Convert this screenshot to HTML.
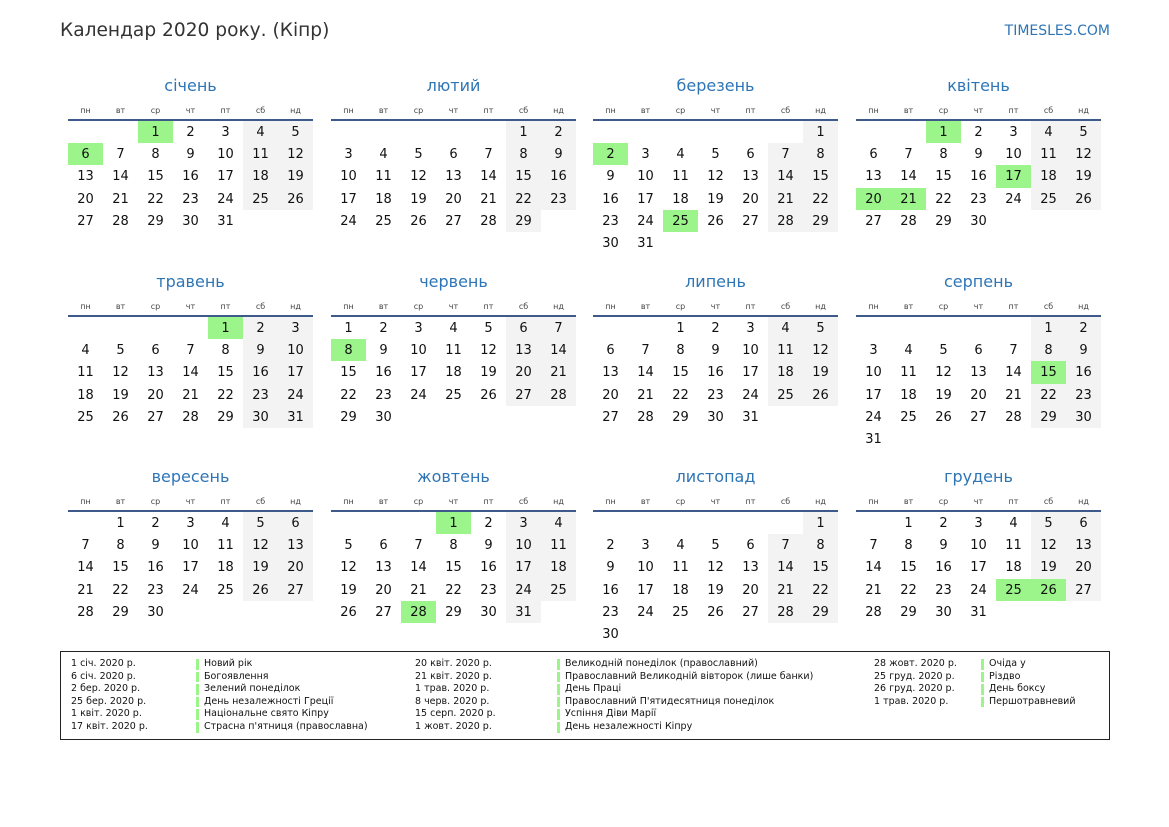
<!DOCTYPE html><html><head><meta charset="utf-8"><style>
body{margin:0;width:1169px;height:827px;background:#fff;font-family:"DejaVu Sans","Liberation Sans",sans-serif;color:#111;position:relative;overflow:hidden}
.t{position:absolute;left:60px;top:20px;font-size:18.6px;color:#333}
.site{position:absolute;right:59px;top:23px;font-size:14px;color:#2e75b6}
.m{position:absolute;width:245px}
.m h3{position:absolute;top:-43px;left:0;width:245px;margin:0;text-align:center;font-weight:normal;font-size:16px;color:#2e75b6}
.hd{position:absolute;top:-13px;left:0;display:grid;grid-template-columns:repeat(7,35px);font-size:8px;color:#444;text-align:center}
.ln{position:absolute;top:0;left:0;width:245px;height:2px;background:#3d5a8a}
.g{position:absolute;top:2px;left:0;display:grid;grid-template-columns:repeat(7,35px);grid-auto-rows:22.2px;font-size:13px;text-align:center;line-height:23px}
.g span:nth-child(7n+6):not(:empty),.g span:nth-child(7n):not(:empty){background:#f3f3f3}
.g span.h{background:#9bf58a!important}
.lg{position:absolute;left:60px;top:651px;width:1048px;height:87px;border:1.5px solid #222;font-size:9.5px;color:#111}
.c{position:absolute;top:6px;line-height:12.6px;white-space:nowrap}
.c.n{top:7px}
.c.n span{display:block;border-left:3px solid #9bf58a;padding-left:5px;margin:0 0 2px 0;line-height:10.6px}
</style></head><body>
<div class="t">Календар 2020 року. (Кіпр)</div>
<div class="site">TIMESLES.COM</div>

<div class="m" style="left:68px;top:119px"><h3>січень</h3><div class="hd"><span>пн</span><span>вт</span><span>ср</span><span>чт</span><span>пт</span><span>сб</span><span>нд</span></div><div class="ln"></div><div class="g"><span></span><span></span><span class="h">1</span><span>2</span><span>3</span><span>4</span><span>5</span><span class="h">6</span><span>7</span><span>8</span><span>9</span><span>10</span><span>11</span><span>12</span><span>13</span><span>14</span><span>15</span><span>16</span><span>17</span><span>18</span><span>19</span><span>20</span><span>21</span><span>22</span><span>23</span><span>24</span><span>25</span><span>26</span><span>27</span><span>28</span><span>29</span><span>30</span><span>31</span></div></div>

<div class="m" style="left:331px;top:119px"><h3>лютий</h3><div class="hd"><span>пн</span><span>вт</span><span>ср</span><span>чт</span><span>пт</span><span>сб</span><span>нд</span></div><div class="ln"></div><div class="g"><span></span><span></span><span></span><span></span><span></span><span>1</span><span>2</span><span>3</span><span>4</span><span>5</span><span>6</span><span>7</span><span>8</span><span>9</span><span>10</span><span>11</span><span>12</span><span>13</span><span>14</span><span>15</span><span>16</span><span>17</span><span>18</span><span>19</span><span>20</span><span>21</span><span>22</span><span>23</span><span>24</span><span>25</span><span>26</span><span>27</span><span>28</span><span>29</span></div></div>

<div class="m" style="left:593px;top:119px"><h3>березень</h3><div class="hd"><span>пн</span><span>вт</span><span>ср</span><span>чт</span><span>пт</span><span>сб</span><span>нд</span></div><div class="ln"></div><div class="g"><span></span><span></span><span></span><span></span><span></span><span></span><span>1</span><span class="h">2</span><span>3</span><span>4</span><span>5</span><span>6</span><span>7</span><span>8</span><span>9</span><span>10</span><span>11</span><span>12</span><span>13</span><span>14</span><span>15</span><span>16</span><span>17</span><span>18</span><span>19</span><span>20</span><span>21</span><span>22</span><span>23</span><span>24</span><span class="h">25</span><span>26</span><span>27</span><span>28</span><span>29</span><span>30</span><span>31</span></div></div>

<div class="m" style="left:856px;top:119px"><h3>квітень</h3><div class="hd"><span>пн</span><span>вт</span><span>ср</span><span>чт</span><span>пт</span><span>сб</span><span>нд</span></div><div class="ln"></div><div class="g"><span></span><span></span><span class="h">1</span><span>2</span><span>3</span><span>4</span><span>5</span><span>6</span><span>7</span><span>8</span><span>9</span><span>10</span><span>11</span><span>12</span><span>13</span><span>14</span><span>15</span><span>16</span><span class="h">17</span><span>18</span><span>19</span><span class="h">20</span><span class="h">21</span><span>22</span><span>23</span><span>24</span><span>25</span><span>26</span><span>27</span><span>28</span><span>29</span><span>30</span></div></div>

<div class="m" style="left:68px;top:315px"><h3>травень</h3><div class="hd"><span>пн</span><span>вт</span><span>ср</span><span>чт</span><span>пт</span><span>сб</span><span>нд</span></div><div class="ln"></div><div class="g"><span></span><span></span><span></span><span></span><span class="h">1</span><span>2</span><span>3</span><span>4</span><span>5</span><span>6</span><span>7</span><span>8</span><span>9</span><span>10</span><span>11</span><span>12</span><span>13</span><span>14</span><span>15</span><span>16</span><span>17</span><span>18</span><span>19</span><span>20</span><span>21</span><span>22</span><span>23</span><span>24</span><span>25</span><span>26</span><span>27</span><span>28</span><span>29</span><span>30</span><span>31</span></div></div>

<div class="m" style="left:331px;top:315px"><h3>червень</h3><div class="hd"><span>пн</span><span>вт</span><span>ср</span><span>чт</span><span>пт</span><span>сб</span><span>нд</span></div><div class="ln"></div><div class="g"><span>1</span><span>2</span><span>3</span><span>4</span><span>5</span><span>6</span><span>7</span><span class="h">8</span><span>9</span><span>10</span><span>11</span><span>12</span><span>13</span><span>14</span><span>15</span><span>16</span><span>17</span><span>18</span><span>19</span><span>20</span><span>21</span><span>22</span><span>23</span><span>24</span><span>25</span><span>26</span><span>27</span><span>28</span><span>29</span><span>30</span></div></div>

<div class="m" style="left:593px;top:315px"><h3>липень</h3><div class="hd"><span>пн</span><span>вт</span><span>ср</span><span>чт</span><span>пт</span><span>сб</span><span>нд</span></div><div class="ln"></div><div class="g"><span></span><span></span><span>1</span><span>2</span><span>3</span><span>4</span><span>5</span><span>6</span><span>7</span><span>8</span><span>9</span><span>10</span><span>11</span><span>12</span><span>13</span><span>14</span><span>15</span><span>16</span><span>17</span><span>18</span><span>19</span><span>20</span><span>21</span><span>22</span><span>23</span><span>24</span><span>25</span><span>26</span><span>27</span><span>28</span><span>29</span><span>30</span><span>31</span></div></div>

<div class="m" style="left:856px;top:315px"><h3>серпень</h3><div class="hd"><span>пн</span><span>вт</span><span>ср</span><span>чт</span><span>пт</span><span>сб</span><span>нд</span></div><div class="ln"></div><div class="g"><span></span><span></span><span></span><span></span><span></span><span>1</span><span>2</span><span>3</span><span>4</span><span>5</span><span>6</span><span>7</span><span>8</span><span>9</span><span>10</span><span>11</span><span>12</span><span>13</span><span>14</span><span class="h">15</span><span>16</span><span>17</span><span>18</span><span>19</span><span>20</span><span>21</span><span>22</span><span>23</span><span>24</span><span>25</span><span>26</span><span>27</span><span>28</span><span>29</span><span>30</span><span>31</span></div></div>

<div class="m" style="left:68px;top:510px"><h3>вересень</h3><div class="hd"><span>пн</span><span>вт</span><span>ср</span><span>чт</span><span>пт</span><span>сб</span><span>нд</span></div><div class="ln"></div><div class="g"><span></span><span>1</span><span>2</span><span>3</span><span>4</span><span>5</span><span>6</span><span>7</span><span>8</span><span>9</span><span>10</span><span>11</span><span>12</span><span>13</span><span>14</span><span>15</span><span>16</span><span>17</span><span>18</span><span>19</span><span>20</span><span>21</span><span>22</span><span>23</span><span>24</span><span>25</span><span>26</span><span>27</span><span>28</span><span>29</span><span>30</span></div></div>

<div class="m" style="left:331px;top:510px"><h3>жовтень</h3><div class="hd"><span>пн</span><span>вт</span><span>ср</span><span>чт</span><span>пт</span><span>сб</span><span>нд</span></div><div class="ln"></div><div class="g"><span></span><span></span><span></span><span class="h">1</span><span>2</span><span>3</span><span>4</span><span>5</span><span>6</span><span>7</span><span>8</span><span>9</span><span>10</span><span>11</span><span>12</span><span>13</span><span>14</span><span>15</span><span>16</span><span>17</span><span>18</span><span>19</span><span>20</span><span>21</span><span>22</span><span>23</span><span>24</span><span>25</span><span>26</span><span>27</span><span class="h">28</span><span>29</span><span>30</span><span>31</span></div></div>

<div class="m" style="left:593px;top:510px"><h3>листопад</h3><div class="hd"><span>пн</span><span>вт</span><span>ср</span><span>чт</span><span>пт</span><span>сб</span><span>нд</span></div><div class="ln"></div><div class="g"><span></span><span></span><span></span><span></span><span></span><span></span><span>1</span><span>2</span><span>3</span><span>4</span><span>5</span><span>6</span><span>7</span><span>8</span><span>9</span><span>10</span><span>11</span><span>12</span><span>13</span><span>14</span><span>15</span><span>16</span><span>17</span><span>18</span><span>19</span><span>20</span><span>21</span><span>22</span><span>23</span><span>24</span><span>25</span><span>26</span><span>27</span><span>28</span><span>29</span><span>30</span></div></div>

<div class="m" style="left:856px;top:510px"><h3>грудень</h3><div class="hd"><span>пн</span><span>вт</span><span>ср</span><span>чт</span><span>пт</span><span>сб</span><span>нд</span></div><div class="ln"></div><div class="g"><span></span><span>1</span><span>2</span><span>3</span><span>4</span><span>5</span><span>6</span><span>7</span><span>8</span><span>9</span><span>10</span><span>11</span><span>12</span><span>13</span><span>14</span><span>15</span><span>16</span><span>17</span><span>18</span><span>19</span><span>20</span><span>21</span><span>22</span><span>23</span><span>24</span><span class="h">25</span><span class="h">26</span><span>27</span><span>28</span><span>29</span><span>30</span><span>31</span></div></div>

<div class="lg">
<div class="c" style="left:10px">1 січ. 2020 р.<br>6 січ. 2020 р.<br>2 бер. 2020 р.<br>25 бер. 2020 р.<br>1 квіт. 2020 р.<br>17 квіт. 2020 р.</div>
<div class="c n" style="left:135px"><span>Новий рік</span><span>Богоявлення</span><span>Зелений понеділок</span><span>День незалежності Греції</span><span>Національне свято Кіпру</span><span>Страсна п'ятниця (православна)</span></div>
<div class="c" style="left:354px">20 квіт. 2020 р.<br>21 квіт. 2020 р.<br>1 трав. 2020 р.<br>8 черв. 2020 р.<br>15 серп. 2020 р.<br>1 жовт. 2020 р.</div>
<div class="c n" style="left:496px"><span>Великодній понеділок (православний)</span><span>Православний Великодній вівторок (лише банки)</span><span>День Праці</span><span>Православний П'ятидесятниця понеділок</span><span>Успіння Діви Марії</span><span>День незалежності Кіпру</span></div>
<div class="c" style="left:813px">28 жовт. 2020 р.<br>25 груд. 2020 р.<br>26 груд. 2020 р.<br>1 трав. 2020 р.</div>
<div class="c n" style="left:920px"><span>Очіда у</span><span>Різдво</span><span>День боксу</span><span>Першотравневий</span></div>
</div>
</body></html>
